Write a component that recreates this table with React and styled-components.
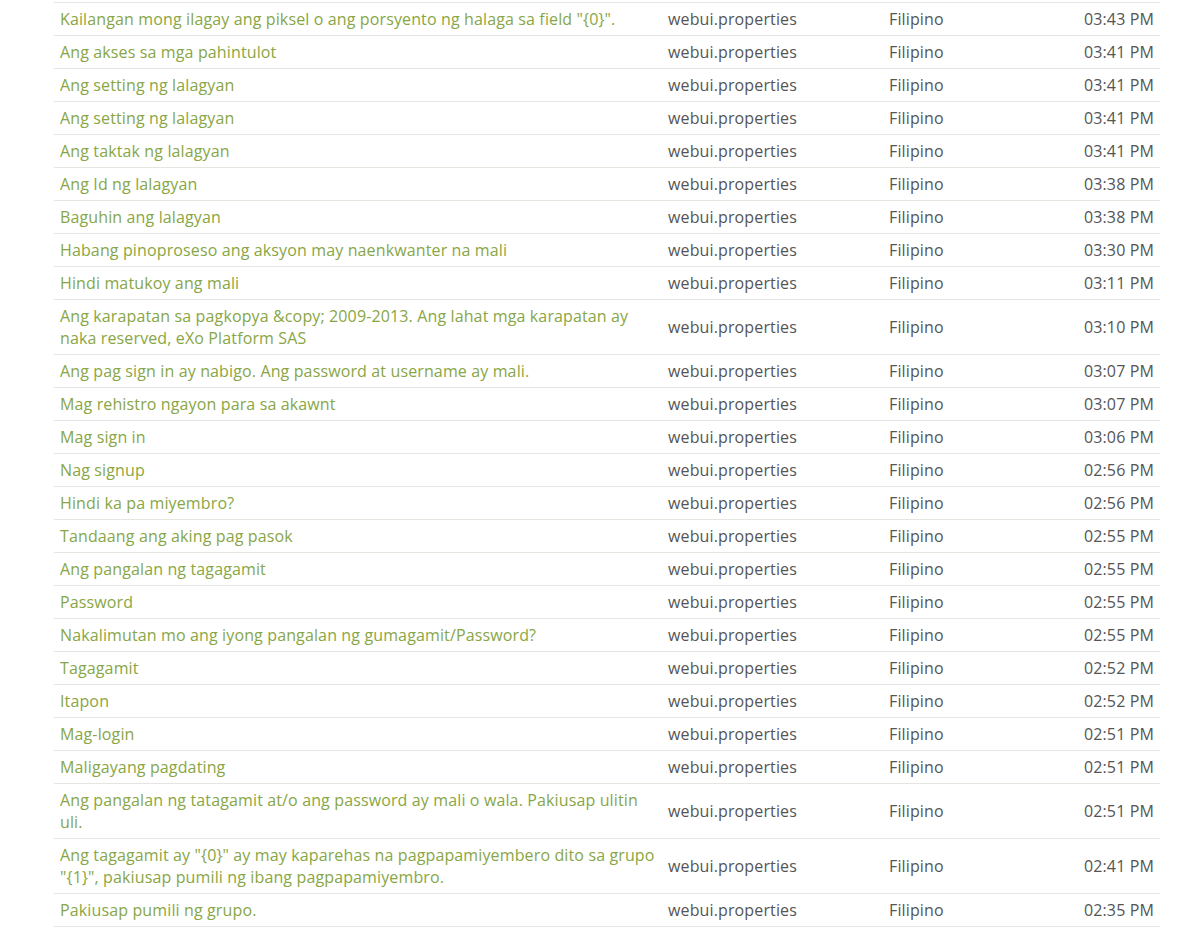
import React from 'react';
import styled, { createGlobalStyle } from 'styled-components';

const GlobalStyle = createGlobalStyle`
    body {
        margin: 0;
        background: #ffffff;
        font-family: "Open Sans", "Liberation Sans", sans-serif;
    }
`;

const rows = [
    ['Kailangan mong ilagay ang piksel o ang porsyento ng halaga sa field "{0}".', '03:43 PM'],
    ['Ang akses sa mga pahintulot', '03:41 PM'],
    ['Ang setting ng lalagyan', '03:41 PM'],
    ['Ang setting ng lalagyan', '03:41 PM'],
    ['Ang taktak ng lalagyan', '03:41 PM'],
    ['Ang Id ng lalagyan', '03:38 PM'],
    ['Baguhin ang lalagyan', '03:38 PM'],
    ['Habang pinoproseso ang aksyon may naenkwanter na mali', '03:30 PM'],
    ['Hindi matukoy ang mali', '03:11 PM'],
    ['Ang karapatan sa pagkopya &copy; 2009-2013. Ang lahat mga karapatan ay naka reserved, eXo Platform SAS', '03:10 PM'],
    ['Ang pag sign in ay nabigo. Ang password at username ay mali.', '03:07 PM'],
    ['Mag rehistro ngayon para sa akawnt', '03:07 PM'],
    ['Mag sign in', '03:06 PM'],
    ['Nag signup', '02:56 PM'],
    ['Hindi ka pa miyembro?', '02:56 PM'],
    ['Tandaang ang aking pag pasok', '02:55 PM'],
    ['Ang pangalan ng tagagamit', '02:55 PM'],
    ['Password', '02:55 PM'],
    ['Nakalimutan mo ang iyong pangalan ng gumagamit/Password?', '02:55 PM'],
    ['Tagagamit', '02:52 PM'],
    ['Itapon', '02:52 PM'],
    ['Mag-login', '02:51 PM'],
    ['Maligayang pagdating', '02:51 PM'],
    ['Ang pangalan ng tatagamit at/o ang password ay mali o wala. Pakiusap ulitin uli.', '02:51 PM'],
    ['Ang tagagamit ay "{0}" ay may kaparehas na pagpapamiyembero dito sa grupo "{1}", pakiusap pumili ng ibang pagpapamiyembro.', '02:41 PM'],
    ['Pakiusap pumili ng grupo.', '02:35 PM'],
];

const Page = () => (
    <Wrap>
        <GlobalStyle />
        <Table>
            <colgroup>
                <col style={{ width: 608 }} />
                <col style={{ width: 221 }} />
                <col />
                <col />
            </colgroup>
            <tbody>
                {rows.map(([label, time], i) => (
                    <Row key={i}>
                        <KeyCell><a href="#">{label}</a></KeyCell>
                        <Cell>webui.properties</Cell>
                        <Cell>Filipino</Cell>
                        <TimeCell>{time}</TimeCell>
                    </Row>
                ))}
            </tbody>
        </Table>
    </Wrap>
);

export default Page;

const Wrap = styled.div`
    padding: 2px 41px 0 54px;
`

const Table = styled.table`
    width: 1106px;
    border-collapse: collapse;
    table-layout: fixed;
    font-size: 16px;
    line-height: 22px;
    letter-spacing: 0.13px;
`

const Row = styled.tr`
    border-top: 1px solid #e6e6e0;
    border-bottom: 1px solid #e6e6e0;
`

const Cell = styled.td`
    padding: 5px 6px;
    color: #555555;
    vertical-align: middle;
`

const KeyCell = styled(Cell)`
    a {
        color: #88a645;
        text-decoration: none;
    }
`

const TimeCell = styled(Cell)`
    text-align: right;
`
